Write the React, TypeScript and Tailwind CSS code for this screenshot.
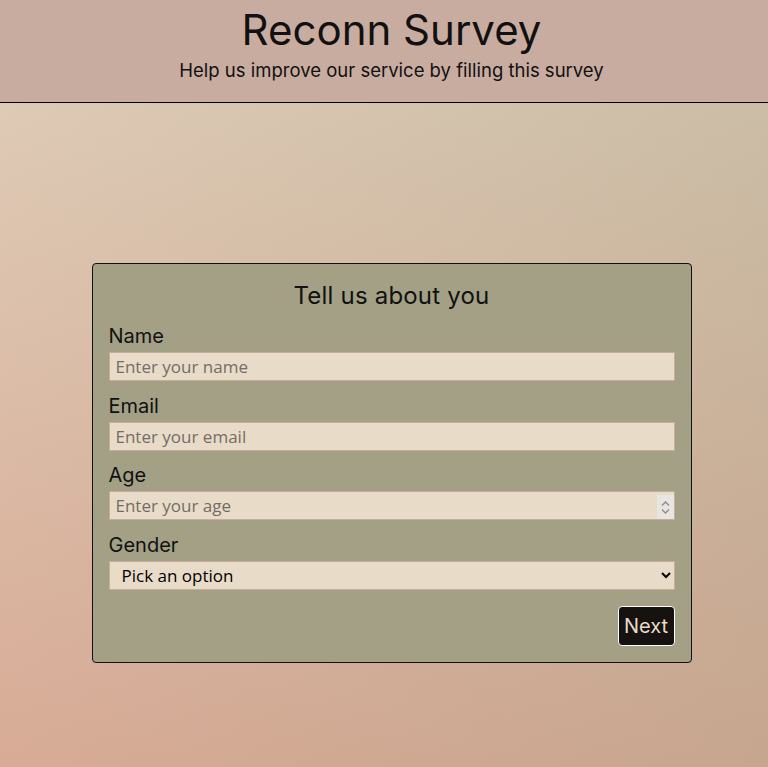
const fields = [
  { label: "Name", placeholder: "Enter your name", type: "text" },
  { label: "Email", placeholder: "Enter your email", type: "email" },
  { label: "Age", placeholder: "Enter your age", type: "number" },
];

const Spinner = () => (
  <span className="pointer-events-none absolute top-[4px] right-[1px] bottom-[1px] flex w-[17px] flex-col items-center justify-center gap-[3px] bg-[#e9e5e3]">
    <svg width="9" height="5" viewBox="0 0 9 5" fill="none" stroke="#8d8a89" strokeWidth="1.3">
      <path d="M1 4.5 4.5 1 8 4.5" />
    </svg>
    <svg width="9" height="5" viewBox="0 0 9 5" fill="none" stroke="#8d8a89" strokeWidth="1.3">
      <path d="M1 0.5 4.5 4 8 0.5" />
    </svg>
  </span>
);

const App = () => {
  return (
    <div className="min-h-screen bg-[linear-gradient(to_right,rgba(148,149,120,0)_0%,rgba(148,149,120,0.25)_100%),linear-gradient(to_bottom,#dfcfba_0%,#d8ab96_100%)] font-['Inter',sans-serif] text-[#111]">
      <header className="flex h-[103px] flex-col items-center border-b border-black bg-[#c9aca0] pt-[5px] pl-[15px]">
        <h1 className="text-[42px] leading-[50px]">Reconn Survey</h1>
        <p className="mt-[4px] text-[18.5px] leading-[22px]">
          Help us improve our service by filling this survey
        </p>
      </header>

      <main className="flex justify-center pt-[160px] pb-[104px] pl-[15px]">
        <form className="w-[600px] rounded-[4px] border border-[#111] bg-[#a3a085] px-4 pt-[17px] pb-4">
          <h2 className="text-center text-[24px] leading-[30px] tracking-[0.2px]">Tell us about you</h2>

          <div className="mt-[11px] flex flex-col gap-[10.5px]">
            {fields.map((f) => (
              <label key={f.label} className="flex flex-col">
                <span className="text-[20px] leading-[28px]">{f.label}</span>
                <span className="relative mt-[2px] flex">
                  <input
                    type={f.type}
                    placeholder={f.placeholder}
                    className="h-[29px] w-full border border-[#c9aca0] bg-[#e8dcc8] px-[6px] font-['Open_Sans',sans-serif] text-[17px] [appearance:textfield] placeholder:text-[#736d66] focus:outline-none [&::-webkit-inner-spin-button]:appearance-none [&::-webkit-outer-spin-button]:appearance-none"
                  />
                  {f.type === "number" && <Spinner />}
                </span>
              </label>
            ))}

            <label className="flex flex-col">
              <span className="text-[20px] leading-[28px]">Gender</span>
              <select
                defaultValue=""
                className="mt-[2px] h-[29px] border border-[#c9aca0] bg-[#e8dcc8] px-[8px] font-['Open_Sans',sans-serif] text-[17px] text-black"
              >
                <option value="" disabled>
                  Pick an option
                </option>
                <option value="male">Male</option>
                <option value="female">Female</option>
                <option value="other">Other</option>
              </select>
            </label>
          </div>

          <div className="mt-[16px] flex justify-end">
            <button
              type="button"
              className="h-[40px] w-[57px] rounded-[4px] border border-white bg-[#151210] text-[20px] text-[#e8dcc8]"
            >
              Next
            </button>
          </div>
        </form>
      </main>
    </div>
  );
};

export default App;
